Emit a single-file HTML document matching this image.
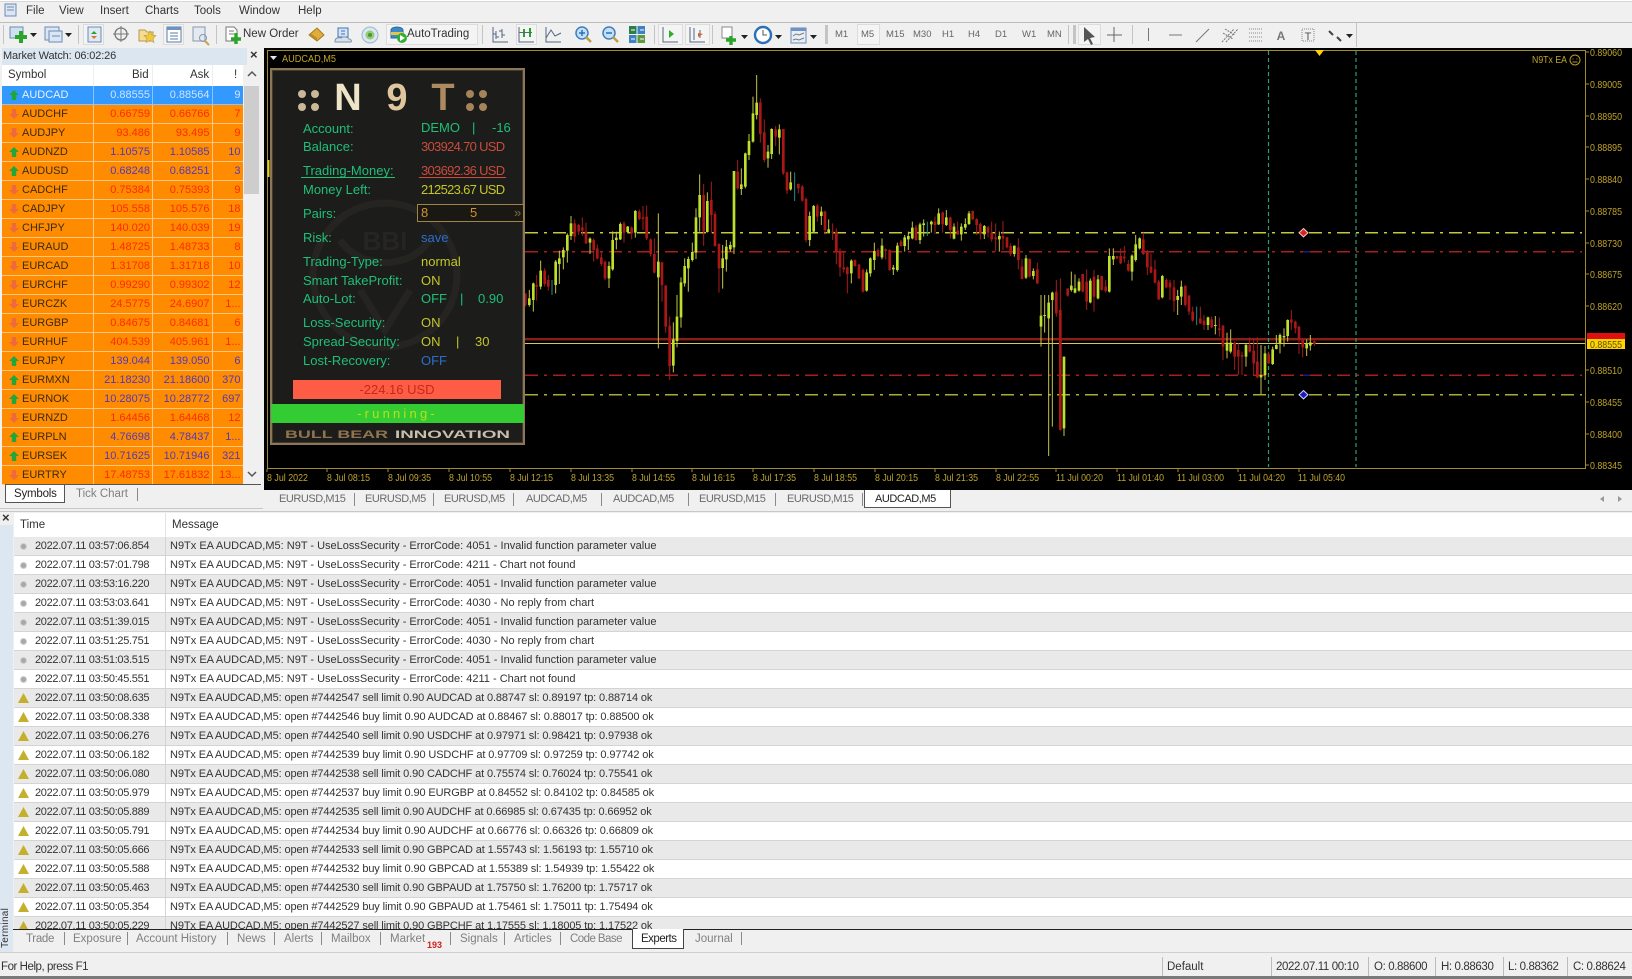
<!DOCTYPE html>
<html><head><meta charset="utf-8"><title>MT4</title>
<style>
html,body{margin:0;padding:0;width:1632px;height:979px;overflow:hidden;background:#f0f0f0;font-family:"Liberation Sans",sans-serif;font-size:11px;color:#333}
.a{position:absolute;white-space:nowrap}
#mw{position:absolute;left:2px;top:86px;width:241px;border-collapse:collapse;table-layout:fixed;font-size:11px}
#mw td{height:17px;padding:1px 2px 0 0;border-bottom:1px solid #ffc680;border-right:1px solid #ffc680;background:#ff8c00;text-align:right;line-height:17px;overflow:hidden;white-space:nowrap}
#mw td:first-child{text-align:left;padding:1px 0 0 20px;color:#3a2a10;position:relative;font-size:11px}
#mw .u td{color:#5238bb}#mw .d td{color:#ff2a00}
#mw .u td:first-child,#mw .d td:first-child{color:#3a2a10}
#mw .s td{background:#3399ff;color:#cfe4ff;border-color:#8cc4ff}
#mw .s td:first-child{color:#e8f2ff}
#mw i{position:absolute;left:7px;top:4px;width:10px;height:10px}
.up{background:#22a53a;clip-path:polygon(50% 0,100% 50%,72% 50%,72% 100%,28% 100%,28% 50%,0 50%)}
.dn{background:#ee6a3c;clip-path:polygon(50% 100%,100% 50%,72% 50%,72% 0,28% 0,28% 50%,0 50%)}
#log{position:absolute;left:14px;top:537px;width:1618px;height:392px;overflow:hidden;font-size:11px}
#log div{position:relative;height:18px;line-height:18px;border-bottom:1px solid #d4d4d4;background:#fff}
#log div:nth-child(odd){background:#e9e9e9}
#log b{position:absolute;left:21px;font-weight:normal;color:#333;letter-spacing:-.32px}
#log span{position:absolute;left:156px;color:#333}
#log div:nth-child(n+9) span{letter-spacing:-.12px}
#log u{position:absolute;left:150.5px;top:0;width:1px;height:19px;background:#d4d4d4}
#log em{position:absolute;left:6px;top:6px;width:7px;height:7px;border-radius:50%;background:#a8a8a8;border:1px solid #d0d0d0;box-sizing:border-box}
#log s{position:absolute;left:4px;top:4px;width:11px;height:10px;background:#c4b02c;clip-path:polygon(50% 0,100% 100%,0 100%)}
.pl{position:absolute;left:303px;font-size:13px;color:#1fbf78;line-height:16px;white-space:nowrap}
.pv{position:absolute;font-size:13px;line-height:16px;white-space:nowrap;color:#1fbf78}
.nm{letter-spacing:-.7px}
.py{color:#c4c62a}.pr{color:#c94c3c}.pb{color:#2b6fd0}
.tab{position:absolute;top:492px;color:#6a6a6a;font-size:11px;letter-spacing:-.45px;line-height:15px}
.sep{position:absolute;width:1px;background:#8a8a8a}
.tt{position:absolute;top:932px;color:#808080;font-size:11.5px;line-height:15px;white-space:nowrap}
.st{position:absolute;top:960px;font-size:11.5px;line-height:14px;letter-spacing:-.38px;white-space:nowrap}
.tf{position:absolute;top:29px;font-size:9.5px;color:#666;line-height:12px}
</style></head><body>

<!-- menu -->
<div class="a" style="left:0;top:0;width:1632px;height:1px;background:#fff"></div>
<div class="a" style="left:0;top:1px;width:1632px;height:1px;background:#d8d8d8"></div>
<div class="a" style="left:0;top:22px;width:1632px;height:1px;background:#bdbdbd"></div>
<div class="a" style="left:26px;top:4px;font-size:11.5px;color:#333;line-height:14px">File</div>
<div class="a" style="left:59px;top:4px;font-size:11.5px;color:#333;line-height:14px">View</div>
<div class="a" style="left:100px;top:4px;font-size:11.5px;color:#333;line-height:14px">Insert</div>
<div class="a" style="left:145px;top:4px;font-size:11.5px;color:#333;line-height:14px">Charts</div>
<div class="a" style="left:194px;top:4px;font-size:11.5px;color:#333;line-height:14px">Tools</div>
<div class="a" style="left:239px;top:4px;font-size:11.5px;color:#333;line-height:14px">Window</div>
<div class="a" style="left:298px;top:4px;font-size:11.5px;color:#333;line-height:14px">Help</div>

<!-- toolbar -->
<svg class="a" style="left:0;top:0" width="1400" height="50" viewBox="0 0 1400 50">
<g fill="none" stroke="#6d8bb0">
<rect x="5" y="4" width="11" height="12" fill="#dce6f2"/><path d="M7 7h7M7 10h7"/>
</g>
<g fill="#c4c4c4"><rect x="3" y="25" width="1" height="19"/><rect x="78" y="25" width="1" height="19"/><rect x="216" y="25" width="1" height="19"/><rect x="482" y="25" width="1" height="19"/><rect x="654" y="25" width="1" height="19"/><rect x="712" y="25" width="1" height="19"/><rect x="825" y="25" width="3" height="19"/><rect x="1068" y="25" width="1" height="19"/><rect x="1073" y="25" width="3" height="19"/><rect x="1132" y="25" width="1" height="19"/><rect x="1356" y="23" width="1" height="24"/></g>
<g fill="#f4f4f4" stroke="#dcdcdc"><rect x="83.5" y="24.5" width="20" height="20"/><rect x="163.5" y="24.5" width="20" height="20"/><rect x="386.5" y="24.5" width="91" height="20"/><rect x="516.5" y="24.5" width="20" height="20"/><rect x="658.5" y="24.5" width="24" height="20"/><rect x="685.5" y="24.5" width="24" height="20"/><rect x="857.5" y="24.5" width="22" height="20"/><rect x="1078.5" y="24.5" width="22" height="20"/></g>
<rect x="10" y="27" width="13" height="11" fill="#cfe0f2" stroke="#6a8bb5"/><path d="M21 31v12M15 37h12" stroke="#2aa52a" stroke-width="4"/>
<path d="M30 33h7l-3.5 4z M65 33h7l-3.5 4z M1 0z" fill="#222"/>
<rect x="45" y="27" width="14" height="13" fill="#dbe6f3" stroke="#6a8bb5"/><rect x="49" y="31" width="13" height="11" fill="#dbe6f3" stroke="#6a8bb5"/><path d="M52 36h8" stroke="#6a8bb5"/>
<rect x="88" y="27" width="13" height="15" fill="#dfe8f3" stroke="#6a8bb5"/><path d="M94 31l3 3h-6z" fill="#2aa52a"/><path d="M94 39l3-3h-6z" fill="#e0703a"/>
<circle cx="121" cy="34" r="6" fill="none" stroke="#777" stroke-width="1.3"/><path d="M121 26v16M113 34h16" stroke="#777"/>
<path d="M139 30h6l2 2h6v9h-14z" fill="#f4dc90" stroke="#b39a50"/><path d="M150 31l2 4 4 .5-3 3 1 4-4-2-4 2 1-4-3-3 4-.5z" fill="#f0c838" stroke="#b39a50" stroke-width=".6"/>
<rect x="167" y="27" width="14" height="15" fill="#fff" stroke="#5b7ca5"/><rect x="167" y="27" width="14" height="3" fill="#6d93c4"/><path d="M170 33h8M170 36h8M170 39h8" stroke="#5b7ca5"/>
<rect x="193" y="27" width="12" height="14" fill="#e4eaf2" stroke="#8898ad"/><circle cx="203" cy="38" r="3.5" fill="none" stroke="#8898ad"/><path d="M205 41l4 4" stroke="#c9a54a" stroke-width="2"/>
<path d="M226 27h8l3 3v11h-11z" fill="#fff" stroke="#777"/><path d="M229 31h5M229 34h5" stroke="#777"/><path d="M236 33v11M231 39h10" stroke="#2aa52a" stroke-width="3.4"/>
<path d="M309 35l8-7 7 7-7 6z" fill="#e0ac3a" stroke="#a57a20"/><path d="M309 35l8 6v-3l-7-5z" fill="#b98a28"/>
<path d="M338 28h10v9h-10z" fill="#d4e4f6" stroke="#3f74b5"/><path d="M341 31h4M341 34h4" stroke="#3f74b5"/><path d="M335 41c0-3 4-4 6-3 2-2 7-1 8 1 2 0 3 2 2 3h-16z" fill="#d8e0ea" stroke="#7f93aa"/>
<circle cx="370" cy="35" r="8" fill="#d7e7f4" stroke="#9cb7cf"/><circle cx="370" cy="35" r="4.5" fill="#9cc86e"/><circle cx="370" cy="35" r="2" fill="#3f9b38"/>
<path d="M391 30c1-4 11-4 12 0v8h-12z" fill="#3c88c9" stroke="#266a9f"/><rect x="391" y="32" width="12" height="3" fill="#e6c44a"/><circle cx="402" cy="38" r="5" fill="#30b030"/><path d="M400 35l5 3-5 3z" fill="#fff"/>
<g fill="none" stroke="#53677f" stroke-width="1"><path d="M493 27v15h15M496 31v8M493 34h3M496 37h3M502 29v9M499 31h3M502 35h3"/><path d="M519 27v15h15"/><path d="M546 27v15h15"/><path d="M663 27v15h15"/><path d="M690 27v15h15"/><path d="M694 28v12M700 30v8"/></g>
<rect x="523" y="29" width="2" height="8" fill="#27a027"/><rect x="529" y="28" width="2" height="9" fill="#27a027"/><rect x="519" y="32" width="13" height="1" fill="#53677f"/>
<path d="M546 38l5-8 4 6 6-3" fill="none" stroke="#53677f"/>
<path d="M669 30l5 4-5 4z" fill="#2ab02a"/><path d="M698 33l5 1-5 3z" fill="#d9622a"/>
<circle cx="582" cy="33" r="6" fill="#c5e0f6" stroke="#3f7fc0" stroke-width="1.5"/><path d="M579 33h6M582 30v6" stroke="#2a70b8" stroke-width="1.5"/><path d="M586 37l5 5" stroke="#c59a3a" stroke-width="2.4"/>
<circle cx="609" cy="33" r="6" fill="#c5e0f6" stroke="#3f7fc0" stroke-width="1.5"/><path d="M606 33h6" stroke="#2a70b8" stroke-width="1.5"/><path d="M613 37l5 5" stroke="#c59a3a" stroke-width="2.4"/>
<rect x="629" y="26" width="7.5" height="8" fill="#2d7f4a"/><rect x="637.5" y="26" width="7.5" height="8" fill="#3e82c4"/><rect x="629" y="35" width="7.5" height="8" fill="#3e82c4"/><rect x="637.5" y="35" width="7.5" height="8" fill="#5d9a3e"/><path d="M631 30h4M640 30h4M631 39h4M640 39h4" stroke="#fff"/>
<path d="M722 27h10v11h-10z" fill="#fff" stroke="#8a8a8a"/><path d="M731 36v9M726 40h10" stroke="#2aa52a" stroke-width="3.4"/><path d="M741 35h7l-3.5 4z M775 35h7l-3.5 4z M810 35h7l-3.5 4z" fill="#222"/>
<circle cx="763" cy="35" r="8" fill="#fff" stroke="#2a70b8" stroke-width="2.4"/><path d="M763 30v5h4" stroke="#555" fill="none"/>
<rect x="791" y="28" width="15" height="15" fill="#e8eef5" stroke="#6a8bb5"/><rect x="791" y="28" width="15" height="3" fill="#6d93c4"/><path d="M793 36l3-2 3 1 5-2M793 40l3-1 3 1 5-2" stroke="#7a7a7a" fill="none"/>
<path d="M1084 27v15l4-3 3 6 2-1-3-6 5-1z" fill="#555"/>
<path d="M1114 27v15M1107 35h15" stroke="#666"/>
<path d="M1148.5 28v13M1169 35h13M1196 42l13-13" stroke="#777"/>
<path d="M1222 42l12-13M1226 42l12-13M1223 33l10 6M1225 29l10 6" stroke="#777" stroke-dasharray="2 1"/>
<path d="M1249 29h13M1249 33h13M1249 37h13M1249 41h13" stroke="#888" stroke-dasharray="1 1"/>
<text x="1281" y="40" text-anchor="middle" font-family="Liberation Sans" font-weight="bold" font-size="12" fill="#777">A</text>
<rect x="1302" y="29" width="12" height="12" fill="none" stroke="#888" stroke-dasharray="1 1"/>
<text x="1308" y="40" text-anchor="middle" font-family="Liberation Sans" font-size="11" fill="#555">T</text>
<path d="M1329 31l4 4M1337 37l4 4" stroke="#444" stroke-width="2"/><path d="M1346 34h7l-3.5 4z" fill="#222"/>
</svg>
<div class="a" style="left:243px;top:27px;font-size:11.5px;color:#333;line-height:14px">New Order</div>
<div class="a" style="left:407px;top:27px;font-size:11.5px;color:#333;line-height:14px">AutoTrading</div>
<div class="tf" style="left:835px">M1</div>
<div class="tf" style="left:861px">M5</div>
<div class="tf" style="left:886px">M15</div>
<div class="tf" style="left:913px">M30</div>
<div class="tf" style="left:942px">H1</div>
<div class="tf" style="left:968px">H4</div>
<div class="tf" style="left:995px">D1</div>
<div class="tf" style="left:1022px">W1</div>
<div class="tf" style="left:1047px">MN</div>

<!-- market watch -->
<div class="a" style="left:2px;top:48px;width:245px;height:17px;background:#dce6f1"></div>
<div class="a" style="left:3px;top:48px;font-size:11px;color:#333;line-height:16px;letter-spacing:-.15px">Market Watch: 06:02:26</div>
<div class="a" style="left:250px;top:47px;font-size:13px;font-weight:bold;color:#333;line-height:16px">×</div>
<div class="a" style="left:2px;top:65px;width:260px;height:21px;background:#fff"></div>
<div class="a" style="left:93px;top:65px;width:1px;height:21px;background:#eee"></div>
<div class="a" style="left:152px;top:65px;width:1px;height:21px;background:#eee"></div>
<div class="a" style="left:212px;top:65px;width:1px;height:21px;background:#eee"></div>
<div class="a" style="left:8px;top:67px;font-size:11.5px;line-height:16px">Symbol</div>
<div class="a" style="left:132px;top:67px;font-size:11.5px;line-height:16px">Bid</div>
<div class="a" style="left:190px;top:67px;font-size:11.5px;line-height:16px">Ask</div>
<div class="a" style="left:234px;top:67px;font-size:11.5px;line-height:16px">!</div>
<table id="mw"><colgroup><col style="width:91px"><col style="width:59.5px"><col style="width:59.5px"><col style="width:31px"></colgroup>
<tr class="s u"><td><i class="up"></i>AUDCAD</td><td>0.88555</td><td>0.88564</td><td>9</td></tr>
<tr class="d"><td><i class="dn"></i>AUDCHF</td><td>0.66759</td><td>0.66766</td><td>7</td></tr>
<tr class="d"><td><i class="dn"></i>AUDJPY</td><td>93.486</td><td>93.495</td><td>9</td></tr>
<tr class="u"><td><i class="up"></i>AUDNZD</td><td>1.10575</td><td>1.10585</td><td>10</td></tr>
<tr class="u"><td><i class="up"></i>AUDUSD</td><td>0.68248</td><td>0.68251</td><td>3</td></tr>
<tr class="d"><td><i class="dn"></i>CADCHF</td><td>0.75384</td><td>0.75393</td><td>9</td></tr>
<tr class="d"><td><i class="dn"></i>CADJPY</td><td>105.558</td><td>105.576</td><td>18</td></tr>
<tr class="d"><td><i class="dn"></i>CHFJPY</td><td>140.020</td><td>140.039</td><td>19</td></tr>
<tr class="d"><td><i class="dn"></i>EURAUD</td><td>1.48725</td><td>1.48733</td><td>8</td></tr>
<tr class="d"><td><i class="dn"></i>EURCAD</td><td>1.31708</td><td>1.31718</td><td>10</td></tr>
<tr class="d"><td><i class="dn"></i>EURCHF</td><td>0.99290</td><td>0.99302</td><td>12</td></tr>
<tr class="d"><td><i class="dn"></i>EURCZK</td><td>24.5775</td><td>24.6907</td><td>1...</td></tr>
<tr class="d"><td><i class="dn"></i>EURGBP</td><td>0.84675</td><td>0.84681</td><td>6</td></tr>
<tr class="d"><td><i class="dn"></i>EURHUF</td><td>404.539</td><td>405.961</td><td>1...</td></tr>
<tr class="u"><td><i class="up"></i>EURJPY</td><td>139.044</td><td>139.050</td><td>6</td></tr>
<tr class="u"><td><i class="up"></i>EURMXN</td><td>21.18230</td><td>21.18600</td><td>370</td></tr>
<tr class="u"><td><i class="up"></i>EURNOK</td><td>10.28075</td><td>10.28772</td><td>697</td></tr>
<tr class="d"><td><i class="dn"></i>EURNZD</td><td>1.64456</td><td>1.64468</td><td>12</td></tr>
<tr class="u"><td><i class="up"></i>EURPLN</td><td>4.76698</td><td>4.78437</td><td>1...</td></tr>
<tr class="u"><td><i class="up"></i>EURSEK</td><td>10.71625</td><td>10.71946</td><td>321</td></tr>
<tr class="d"><td><i class="dn"></i>EURTRY</td><td>17.48753</td><td>17.61832</td><td>13...</td></tr>
</table>
<div class="a" style="left:243px;top:65px;width:19px;height:420px;background:#f0f0f0"></div>
<div class="a" style="left:244px;top:86px;width:15px;height:108px;background:#cdcdcd"></div>
<svg class="a" style="left:244px;top:68px" width="16" height="412"><path d="M4 8l4-4 4 4M4 404l4 4 4-4" fill="none" stroke="#555" stroke-width="1.5"/></svg>
<div class="a" style="left:5px;top:484px;width:256px;height:1px;background:#555"></div>
<div class="a" style="left:5px;top:485px;width:60px;height:18px;background:#fff;border:1px solid #555;border-top:none;box-sizing:border-box"></div>
<div class="a" style="left:14px;top:487px;font-size:11.5px;color:#222;line-height:14px;letter-spacing:-.2px">Symbols</div>
<div class="a" style="left:76px;top:487px;font-size:11.5px;color:#808080;line-height:14px">Tick Chart</div>
<div class="sep" style="left:137px;top:488px;height:13px"></div>
<div class="a" style="left:0;top:508px;width:263px;height:1px;background:#c8c8c8"></div>

<!-- chart -->
<svg class="a" style="left:264px;top:48px;background:#000" width="1368" height="440" viewBox="264 48 1368 440">
<path d="M267.5 50.5H1585.5V468.5H267.5Z" fill="none" stroke="#a08c2c"/>
<g fill="none" stroke-width="1.5">
<path d="M525 232.7H1582" stroke="#c4c83a" stroke-dasharray="13 6 3 6"/>
<path d="M525 251.7H1582" stroke="#a81e1e" stroke-dasharray="13 6 3 6"/>
<path d="M525 375.3H1582" stroke="#a81e1e" stroke-dasharray="13 6 3 6"/>
<path d="M525 394.7H1582" stroke="#a8ac34" stroke-dasharray="13 6 3 6"/>
</g>
<rect x="525" y="338" width="1060" height="2.4" fill="#8a1c1c"/>
<rect x="525" y="343" width="1060" height="1" fill="#d8c858"/>
<path d="M1268.5 51V467M1356 51V467" stroke="#2d9c70" stroke-width="1.2" stroke-dasharray="4 3" fill="none"/>
<path d="M1303.5 228.5l4.5 4.2-4.5 4.2-4.5-4.2z" fill="#e02020" stroke="#e8d0d0"/>
<path d="M1303.5 390.5l4.5 4.2-4.5 4.2-4.5-4.2z" fill="#1a1ac8" stroke="#d8d8f0"/>
<path d="M1303 251.7h7M1303 375.3h7" stroke="#1a1a90" stroke-width="1.5"/>
<path d="M1315 50h9l-4.5 6z" fill="#ffd400"/>
<g transform="translate(520 60) scale(.33333)" fill="none">
<path stroke="#c4c44a" stroke-width="3" d="M28 690V740M40 668V755M62 602V688M107 600V700M118 572V672M130 562V628M142 520V608M153 468V540M210 532V582M267 605V684M278 514V632M289 515V568M301 487V540M323 498V520M346 450V533M415 460V865M460 787V937M471 705V862M483 652V803M494 595V680M505 590V695M517 548V605M528 445V597M539 343V515M562 397V518M608 555V686M619 540V635M631 545V575M642 333V582M664 325V405M676 278V385M687 222V300M699 110V248M710 45V178M744 255V323M755 205V297M778 193V283M812 335V392M869 455V558M881 435V518M904 440V495M926 478V520"/>
<path stroke="#bde02a" stroke-width="8" d="M28 715V735M40 670V720M62 632V680M107 605V675M118 595V612M130 570V592M142 525V572M153 490V528M210 536V548M267 618V655M278 540V628M289 533V540M301 492V538M323 500V516M346 453V518M415 605V652M460 838V917M471 770V843M483 667V772M494 618V670M505 597V625M517 576V600M528 472V578M539 405V472M562 423V516M608 595V624M619 560V598M631 555V568M642 333V562M664 373V387M676 280V380M687 243V285M699 160V245M710 128V165M744 275V295M755 207V282M778 208V233M812 367V388M869 468V540M881 438V515M904 455V468M926 508V520"/>
<path stroke="#a51c1c" stroke-width="3" d="M16 700V740M50 645V722M74 625V680M85 645V692M164 478V548M176 492V525M187 472V528M198 488V552M221 535V605M232 553V598M244 575V618M255 602V660M312 484V548M335 500V538M358 448V480M369 438V510M380 437V540M392 535V590M403 535V640M426 605V725M437 675V818M449 770V960M551 372V558M574 365V520M585 455V560M597 550V698M653 300V388M721 115V248M733 178V307M767 198V258M790 207V345M801 335V402M835 370V400M847 375V425M858 412V547M892 432V485M915 452V523M938 490V540M949 505V613"/>
<path stroke="#ab1616" stroke-width="8" d="M16 700V735M50 675V680M74 632V672M85 660V680M164 490V530M176 495V515M187 502V512M198 515V550M221 540V570M232 565V595M244 592V612M255 605V655M312 490V518M335 503V520M358 455V477M369 472V477M380 470V535M392 538V582M403 582V638M426 607V675M437 677V800M449 797V918M551 405V515M574 420V465M585 462V558M597 552V625M653 335V385M721 127V222M733 217V300M767 208V230M790 207V340M801 337V392M835 372V385M847 380V422M858 417V540M892 437V470M915 455V510M938 515V518M949 515V575"/>
<path stroke="#2a8a8a" stroke-width="3" d="M96 660V705M824 337V423"/>
</g>
<g transform="translate(840 180) scale(.33333)" fill="none">
<path stroke="#c4c44a" stroke-width="3" d="M34 238V310M80 268V335M91 232V290M103 188V270M126 175V238M160 255V285M172 188V275M194 165V215M205 155V210M217 125V178M240 128V192M251 118V170M274 122V158M296 85V135M319 90V138M342 130V178M364 130V182M376 115V150M387 93V135M433 135V177M478 155V215M523 197V230M558 225V297M580 265V298M603 345V500M614 345V458M626 345V828M637 335V740M672 530V768M694 275V335M705 283V340M717 295V335M751 295V370M774 285V358M808 205V338M820 205V255M876 223V302M887 165V245M899 172V208"/>
<path stroke="#bde02a" stroke-width="8" d="M34 242V280M80 277V332M91 235V280M103 213V240M126 197V232M160 263V268M172 197V270M194 172V198M205 168V178M217 143V175M240 133V180M251 130V135M274 125V133M296 100V133M319 112V135M342 140V176M364 140V163M376 132V143M387 100V132M433 138V163M478 168V178M523 197V222M558 235V293M580 273V288M603 407V440M614 405V408M626 368V415M637 338V360M672 530V745M694 317V330M705 325V338M717 305V332M751 302V367M774 298V355M808 228V335M820 228V238M876 227V275M887 193V240M899 175V205"/>
<path stroke="#a51c1c" stroke-width="3" d="M0 205V290M11 215V278M22 260V340M45 238V260M57 252V297M69 265V338M114 205V232M137 205V238M149 208V272M183 180V200M228 135V182M285 110V162M308 95V158M331 110V175M353 125V165M398 92V120M410 115V165M421 128V178M444 138V172M455 125V185M467 130V215M489 123V210M501 170V205M512 190V228M535 175V268M546 237V298M569 235V292M592 248V312M649 300V410M661 295V752M683 325V350M728 282V337M740 268V390M762 270V395M785 288V332M797 300V338M831 228V237M842 205V252M853 198V248M865 240V275M910 158V225M922 210V285M933 220V280M945 240V310M956 300V360"/>
<path stroke="#ab1616" stroke-width="8" d="M0 213V262M11 262V268M22 262V282M45 240V258M57 254V295M69 270V335M114 210V228M137 208V213M149 210V270M183 185V198M228 142V180M285 125V135M308 97V133M331 113V150M353 152V163M398 93V118M410 117V135M421 132V160M444 142V158M455 158V178M467 172V178M489 168V175M501 172V202M512 198V222M535 202V240M546 260V297M569 237V290M592 268V310M649 335V400M661 390V750M683 325V347M728 282V335M740 305V365M762 290V350M785 288V330M797 320V333M831 228V235M842 228V250M853 230V235M865 252V272M910 178V222M922 213V262M933 260V278M945 268V308M956 305V358"/>
<path stroke="#2a8a8a" stroke-width="3" d="M262 125V168"/>
</g>
<g transform="translate(1150 200) scale(.33333)" fill="none">
<path stroke="#c4c44a" stroke-width="3" d="M37 225V295M83 270V345M94 242V315M174 350V390M196 348V403M231 398V475M242 388V460M288 430V500M333 435V584M345 438V540M368 440V495M379 405V448M390 400V460M402 385V440M413 358V425M470 418V468M481 405V452"/>
<path stroke="#bde02a" stroke-width="8" d="M37 228V292M83 288V300M94 260V290M174 352V375M196 375V378M231 428V452M242 428V455M288 435V470M333 525V532M345 460V525M368 448V492M379 435V447M390 405V430M402 408V412M413 360V408M470 430V445M481 427V437"/>
<path stroke="#a51c1c" stroke-width="3" d="M49 235V265M60 240V300M72 240V335M106 255V320M117 285V345M128 320V365M151 320V372M162 345V390M185 350V384M208 352V410M219 375V480M254 425V510M265 430V525M276 455V525M299 412V458M311 415V525M322 412V535M356 455V492M424 330V390M436 362V400M447 378V462M458 418V472M493 420V438"/>
<path stroke="#ab1616" stroke-width="8" d="M49 240V262M60 248V262M72 262V303M106 258V315M117 287V335M128 335V362M151 355V370M162 362V375M185 358V382M208 385V390M219 377V440M254 428V470M265 450V470M276 465V470M299 435V455M311 452V490M322 485V532M356 462V490M424 358V368M436 365V385M447 380V415M458 420V442M493 424V432"/>
<path stroke="#2a8a8a" stroke-width="3" d="M140 320V375"/>
</g>
<path d="M1585 52h4M1585 84h4M1585 116h4M1585 147h4M1585 179h4M1585 211h4M1585 243h4M1585 274h4M1585 306h4M1585 370h4M1585 402h4M1585 434h4M1585 465h4" stroke="#a08c2c"/>
<path d="M267 469v3M327 469v3M388 469v3M449 469v3M510 469v3M571 469v3M632 469v3M692 469v3M753 469v3M814 469v3M875 469v3M935 469v3M996 469v3M1056 469v3M1117 469v3M1178 469v3M1238 469v3M1299 469v3" stroke="#a08c2c"/>
<g font-family="Liberation Sans" font-size="10.5" fill="#c0a52a" lengthAdjust="spacingAndGlyphs">
<text x="1590" y="56" textLength="32" lengthAdjust="spacingAndGlyphs">0.89060</text><text x="1590" y="88" textLength="32" lengthAdjust="spacingAndGlyphs">0.89005</text><text x="1590" y="120" textLength="32" lengthAdjust="spacingAndGlyphs">0.88950</text><text x="1590" y="151" textLength="32" lengthAdjust="spacingAndGlyphs">0.88895</text><text x="1590" y="183" textLength="32" lengthAdjust="spacingAndGlyphs">0.88840</text><text x="1590" y="215" textLength="32" lengthAdjust="spacingAndGlyphs">0.88785</text><text x="1590" y="247" textLength="32" lengthAdjust="spacingAndGlyphs">0.88730</text><text x="1590" y="278" textLength="32" lengthAdjust="spacingAndGlyphs">0.88675</text><text x="1590" y="310" textLength="32" lengthAdjust="spacingAndGlyphs">0.88620</text><text x="1590" y="374" textLength="32" lengthAdjust="spacingAndGlyphs">0.88510</text><text x="1590" y="406" textLength="32" lengthAdjust="spacingAndGlyphs">0.88455</text><text x="1590" y="438" textLength="32" lengthAdjust="spacingAndGlyphs">0.88400</text><text x="1590" y="469" textLength="32" lengthAdjust="spacingAndGlyphs">0.88345</text>
<text x="267" y="481" textLength="41" lengthAdjust="spacingAndGlyphs">8 Jul 2022</text><text x="327" y="481" textLength="43" lengthAdjust="spacingAndGlyphs">8 Jul 08:15</text><text x="388" y="481" textLength="43" lengthAdjust="spacingAndGlyphs">8 Jul 09:35</text><text x="449" y="481" textLength="43" lengthAdjust="spacingAndGlyphs">8 Jul 10:55</text><text x="510" y="481" textLength="43" lengthAdjust="spacingAndGlyphs">8 Jul 12:15</text><text x="571" y="481" textLength="43" lengthAdjust="spacingAndGlyphs">8 Jul 13:35</text><text x="632" y="481" textLength="43" lengthAdjust="spacingAndGlyphs">8 Jul 14:55</text><text x="692" y="481" textLength="43" lengthAdjust="spacingAndGlyphs">8 Jul 16:15</text><text x="753" y="481" textLength="43" lengthAdjust="spacingAndGlyphs">8 Jul 17:35</text><text x="814" y="481" textLength="43" lengthAdjust="spacingAndGlyphs">8 Jul 18:55</text><text x="875" y="481" textLength="43" lengthAdjust="spacingAndGlyphs">8 Jul 20:15</text><text x="935" y="481" textLength="43" lengthAdjust="spacingAndGlyphs">8 Jul 21:35</text><text x="996" y="481" textLength="43" lengthAdjust="spacingAndGlyphs">8 Jul 22:55</text><text x="1056" y="481" textLength="47" lengthAdjust="spacingAndGlyphs">11 Jul 00:20</text><text x="1117" y="481" textLength="47" lengthAdjust="spacingAndGlyphs">11 Jul 01:40</text><text x="1177" y="481" textLength="47" lengthAdjust="spacingAndGlyphs">11 Jul 03:00</text><text x="1238" y="481" textLength="47" lengthAdjust="spacingAndGlyphs">11 Jul 04:20</text><text x="1298" y="481" textLength="47" lengthAdjust="spacingAndGlyphs">11 Jul 05:40</text>
<text x="1532" y="63" textLength="35" lengthAdjust="spacingAndGlyphs">N9Tx EA</text><text x="282" y="62" font-size="10" textLength="54" lengthAdjust="spacingAndGlyphs">AUDCAD,M5</text>
</g>
<circle cx="1575" cy="60" r="5" fill="none" stroke="#b89a28"/><path d="M1572.5 59h1M1576.5 59h1M1572.5 62h5" stroke="#b89a28"/>
<path d="M270 56h7l-3.5 4z" fill="#e8e8e8"/>
<rect x="1587" y="333" width="38" height="7" fill="#e01010"/>
<rect x="1587" y="339" width="38" height="10" fill="#ffd400"/>
<text x="1590" y="348" font-family="Liberation Sans" font-size="10.5" fill="#5a4c10" textLength="32" lengthAdjust="spacingAndGlyphs">0.88555</text>
<path d="M268.5 160V177" stroke="#e8d020" stroke-width="2"/>
</svg>

<!-- Panel -->
<div class="a" style="left:270px;top:68px;width:255px;height:377px;background:#1c1c1a;border:2px solid #8d7657;box-sizing:border-box;box-shadow:inset 0 0 0 1px #443a2a"></div>
<svg class="a" style="left:270px;top:68px" width="255" height="377" viewBox="270 68 255 377">
<g fill="none" stroke="#252421" stroke-width="7"><circle cx="385" cy="275" r="72"/><path d="M340 240c20 30 70 30 90 0M360 290l25 40 25-40"/></g>
<text x="385" y="250" text-anchor="middle" font-family="Liberation Sans" font-weight="bold" font-size="26" fill="#262522">BBI</text>
<g fill="#c9b999"><circle cx="302" cy="94" r="4"/><circle cx="315" cy="94" r="4"/><circle cx="302" cy="107" r="4"/><circle cx="315" cy="107" r="4"/></g>
<g fill="#a5845a"><circle cx="470" cy="94" r="4"/><circle cx="483" cy="94" r="4"/><circle cx="470" cy="107" r="4"/><circle cx="483" cy="107" r="4"/></g>
<text x="348" y="110" text-anchor="middle" font-family="Liberation Sans" font-weight="bold" font-size="38" fill="#eee5c8">N</text>
<text x="397" y="110" text-anchor="middle" font-family="Liberation Sans" font-weight="bold" font-size="38" fill="#dfc69f">9</text>
<text x="443" y="110" text-anchor="middle" font-family="Liberation Sans" font-weight="bold" font-size="38" fill="#ad8a60">T</text>
<text x="285" y="438" font-family="Liberation Sans" font-weight="bold" font-size="11" textLength="103" lengthAdjust="spacingAndGlyphs" fill="#8f7450">BULL BEAR</text>
<text x="395" y="438" font-family="Liberation Sans" font-weight="bold" font-size="11" textLength="115" lengthAdjust="spacingAndGlyphs" fill="#c8c0ac">INNOVATION</text>
</svg>
<div class="pl" style="top:121px">Account:</div><div class="pv" style="left:421px;top:120px">DEMO</div><div class="pv" style="left:472px;top:120px">|</div><div class="pv" style="left:492px;top:120px">-16</div>
<div class="pl" style="top:139px">Balance:</div><div class="pv pr nm" style="left:421px;top:139px">303924.70 USD</div>
<div class="pl" style="top:163px">Trading-Money:</div><div class="pv pr nm" style="left:421px;top:163px">303692.36 USD</div>
<div class="a" style="left:301px;top:177px;width:94px;height:1px;background:#1fbf78"></div>
<div class="a" style="left:419px;top:177px;width:87px;height:1px;background:#c94c3c"></div>
<div class="pl" style="top:182px">Money Left:</div><div class="pv py nm" style="left:421px;top:182px">212523.67 USD</div>
<div class="pl" style="top:206px">Pairs:</div>
<div class="a" style="left:417px;top:204px;width:107px;height:18px;border:1px solid #a08348;box-sizing:border-box;background:#1a1812"></div>
<div class="pv" style="left:421px;top:205px;color:#d09330">8</div><div class="pv" style="left:470px;top:205px;color:#d09330">5</div><div class="pv" style="left:514px;top:205px;color:#7d6a4a">»</div>
<div class="pl" style="top:230px">Risk:</div><div class="pv pb" style="left:421px;top:230px">save</div>
<div class="pl" style="top:254px">Trading-Type:</div><div class="pv py" style="left:421px;top:254px">normal</div>
<div class="pl" style="top:273px">Smart TakeProfit:</div><div class="pv py" style="left:421px;top:273px">ON</div>
<div class="pl" style="top:291px">Auto-Lot:</div><div class="pv" style="left:421px;top:291px">OFF</div><div class="pv" style="left:460px;top:291px">|</div><div class="pv" style="left:478px;top:291px">0.90</div>
<div class="pl" style="top:315px">Loss-Security:</div><div class="pv py" style="left:421px;top:315px">ON</div>
<div class="pl" style="top:334px">Spread-Security:</div><div class="pv py" style="left:421px;top:334px">ON</div><div class="pv py" style="left:456px;top:334px">|</div><div class="pv py" style="left:475px;top:334px">30</div>
<div class="pl" style="top:353px">Lost-Recovery:</div><div class="pv pb" style="left:421px;top:353px">OFF</div>
<div class="a" style="left:293px;top:380px;width:208px;height:19px;background:#ff5c45;color:#c42a1c;font-size:13px;line-height:19px;text-align:center">-224.16 USD</div>
<div class="a" style="left:271px;top:404px;width:253px;height:19px;background:#33cc33;color:#b8e020;font-size:13px;line-height:19px;text-align:center;letter-spacing:3.2px">-running-</div>

<!-- chart tabs -->
<div class="a" style="left:264px;top:488px;width:1368px;height:2px;background:#000"></div>
<div class="tab" style="left:279px">EURUSD,M15</div><div class="sep" style="left:354px;top:493px;height:13px"></div>
<div class="tab" style="left:365px">EURUSD,M5</div><div class="sep" style="left:433px;top:493px;height:13px"></div>
<div class="tab" style="left:444px">EURUSD,M5</div><div class="sep" style="left:513px;top:493px;height:13px"></div>
<div class="tab" style="left:526px">AUDCAD,M5</div><div class="sep" style="left:601px;top:493px;height:13px"></div>
<div class="tab" style="left:613px">AUDCAD,M5</div><div class="sep" style="left:688px;top:493px;height:13px"></div>
<div class="tab" style="left:699px">EURUSD,M15</div><div class="sep" style="left:775px;top:493px;height:13px"></div>
<div class="tab" style="left:787px">EURUSD,M15</div><div class="sep" style="left:862px;top:493px;height:13px"></div>
<div class="a" style="left:864px;top:490px;width:87px;height:18px;background:#fff;border:1px solid #555;border-top:none;box-sizing:border-box"></div>
<div class="tab" style="left:875px;color:#222">AUDCAD,M5</div>
<svg class="a" style="left:1595px;top:493px" width="30" height="12"><path d="M9 3l-4 3 4 3zM23 3l4 3-4 3z" fill="#999"/></svg>

<!-- terminal -->
<div class="a" style="left:0;top:511px;width:1632px;height:1px;background:#c8c8c8"></div>
<div class="a" style="left:2px;top:510px;font-size:13px;font-weight:bold;line-height:16px;color:#333">×</div>
<div class="a" style="left:0;top:525px;width:13px;height:427px;background:#dde7f2"></div>
<div class="a" style="left:14px;top:513px;width:1618px;height:24px;background:#fff"></div>
<div class="a" style="left:165px;top:513px;width:1px;height:24px;background:#e4e4e4"></div>
<div class="a" style="left:20px;top:517px;font-size:11.5px;line-height:16px">Time</div>
<div class="a" style="left:172px;top:517px;font-size:11.5px;line-height:16px">Message</div>
<div id="log">
<div><em></em><b>2022.07.11 03:57:06.854</b><u></u><span>N9Tx EA AUDCAD,M5: N9T - UseLossSecurity - ErrorCode: 4051 - Invalid function parameter value</span></div>
<div><em></em><b>2022.07.11 03:57:01.798</b><u></u><span>N9Tx EA AUDCAD,M5: N9T - UseLossSecurity - ErrorCode: 4211 - Chart not found</span></div>
<div><em></em><b>2022.07.11 03:53:16.220</b><u></u><span>N9Tx EA AUDCAD,M5: N9T - UseLossSecurity - ErrorCode: 4051 - Invalid function parameter value</span></div>
<div><em></em><b>2022.07.11 03:53:03.641</b><u></u><span>N9Tx EA AUDCAD,M5: N9T - UseLossSecurity - ErrorCode: 4030 - No reply from chart</span></div>
<div><em></em><b>2022.07.11 03:51:39.015</b><u></u><span>N9Tx EA AUDCAD,M5: N9T - UseLossSecurity - ErrorCode: 4051 - Invalid function parameter value</span></div>
<div><em></em><b>2022.07.11 03:51:25.751</b><u></u><span>N9Tx EA AUDCAD,M5: N9T - UseLossSecurity - ErrorCode: 4030 - No reply from chart</span></div>
<div><em></em><b>2022.07.11 03:51:03.515</b><u></u><span>N9Tx EA AUDCAD,M5: N9T - UseLossSecurity - ErrorCode: 4051 - Invalid function parameter value</span></div>
<div><em></em><b>2022.07.11 03:50:45.551</b><u></u><span>N9Tx EA AUDCAD,M5: N9T - UseLossSecurity - ErrorCode: 4211 - Chart not found</span></div>
<div><s></s><b>2022.07.11 03:50:08.635</b><u></u><span>N9Tx EA AUDCAD,M5: open #7442547 sell limit 0.90 AUDCAD at 0.88747 sl: 0.89197 tp: 0.88714 ok</span></div>
<div><s></s><b>2022.07.11 03:50:08.338</b><u></u><span>N9Tx EA AUDCAD,M5: open #7442546 buy limit 0.90 AUDCAD at 0.88467 sl: 0.88017 tp: 0.88500 ok</span></div>
<div><s></s><b>2022.07.11 03:50:06.276</b><u></u><span>N9Tx EA AUDCAD,M5: open #7442540 sell limit 0.90 USDCHF at 0.97971 sl: 0.98421 tp: 0.97938 ok</span></div>
<div><s></s><b>2022.07.11 03:50:06.182</b><u></u><span>N9Tx EA AUDCAD,M5: open #7442539 buy limit 0.90 USDCHF at 0.97709 sl: 0.97259 tp: 0.97742 ok</span></div>
<div><s></s><b>2022.07.11 03:50:06.080</b><u></u><span>N9Tx EA AUDCAD,M5: open #7442538 sell limit 0.90 CADCHF at 0.75574 sl: 0.76024 tp: 0.75541 ok</span></div>
<div><s></s><b>2022.07.11 03:50:05.979</b><u></u><span>N9Tx EA AUDCAD,M5: open #7442537 buy limit 0.90 EURGBP at 0.84552 sl: 0.84102 tp: 0.84585 ok</span></div>
<div><s></s><b>2022.07.11 03:50:05.889</b><u></u><span>N9Tx EA AUDCAD,M5: open #7442535 sell limit 0.90 AUDCHF at 0.66985 sl: 0.67435 tp: 0.66952 ok</span></div>
<div><s></s><b>2022.07.11 03:50:05.791</b><u></u><span>N9Tx EA AUDCAD,M5: open #7442534 buy limit 0.90 AUDCHF at 0.66776 sl: 0.66326 tp: 0.66809 ok</span></div>
<div><s></s><b>2022.07.11 03:50:05.666</b><u></u><span>N9Tx EA AUDCAD,M5: open #7442533 sell limit 0.90 GBPCAD at 1.55743 sl: 1.56193 tp: 1.55710 ok</span></div>
<div><s></s><b>2022.07.11 03:50:05.588</b><u></u><span>N9Tx EA AUDCAD,M5: open #7442532 buy limit 0.90 GBPCAD at 1.55389 sl: 1.54939 tp: 1.55422 ok</span></div>
<div><s></s><b>2022.07.11 03:50:05.463</b><u></u><span>N9Tx EA AUDCAD,M5: open #7442530 sell limit 0.90 GBPAUD at 1.75750 sl: 1.76200 tp: 1.75717 ok</span></div>
<div><s></s><b>2022.07.11 03:50:05.354</b><u></u><span>N9Tx EA AUDCAD,M5: open #7442529 buy limit 0.90 GBPAUD at 1.75461 sl: 1.75011 tp: 1.75494 ok</span></div>
<div><s></s><b>2022.07.11 03:50:05.229</b><u></u><span>N9Tx EA AUDCAD,M5: open #7442527 sell limit 0.90 GBPCHF at 1.17555 sl: 1.18005 tp: 1.17522 ok</span></div>
</div>
<div class="a" style="left:13px;top:929px;width:1619px;height:1px;background:#222"></div>
<div class="a" style="left:632px;top:929px;width:52px;height:20px;background:#fff;border:1px solid #444;border-top:none;box-sizing:border-box"></div>
<div class="tt" style="left:26px;letter-spacing:-.3px">Trade</div><div class="sep" style="left:64px;top:932px;height:13px"></div>
<div class="tt" style="left:73px">Exposure</div><div class="sep" style="left:127px;top:932px;height:13px"></div>
<div class="tt" style="left:136px">Account History</div><div class="sep" style="left:227px;top:932px;height:13px"></div>
<div class="tt" style="left:237px">News</div><div class="sep" style="left:274px;top:932px;height:13px"></div>
<div class="tt" style="left:284px">Alerts</div><div class="sep" style="left:321px;top:932px;height:13px"></div>
<div class="tt" style="left:331px">Mailbox</div><div class="sep" style="left:380px;top:932px;height:13px"></div>
<div class="tt" style="left:390px">Market</div><div class="a" style="left:427px;top:940px;font-size:9px;font-weight:bold;color:#d02020;line-height:11px">193</div><div class="sep" style="left:450px;top:932px;height:13px"></div>
<div class="tt" style="left:460px">Signals</div><div class="sep" style="left:504px;top:932px;height:13px"></div>
<div class="tt" style="left:514px">Articles</div><div class="sep" style="left:560px;top:932px;height:13px"></div>
<div class="tt" style="left:570px;letter-spacing:-.55px">Code Base</div>
<div class="tt" style="left:641px;color:#222;letter-spacing:-.5px">Experts</div>
<div class="tt" style="left:695px">Journal</div><div class="sep" style="left:741px;top:932px;height:13px"></div>
<div class="a" style="left:0;top:925px;width:13px;height:27px;background:#dde7f2"></div>
<div class="a" style="left:-14px;top:922px;width:40px;font-size:10px;line-height:12px;color:#333;transform:rotate(-90deg);text-align:center;letter-spacing:.3px">Terminal</div>
<div class="a" style="left:0;top:952px;width:1632px;height:1px;background:#cfcfcf"></div>

<!-- status -->
<div class="st" style="left:1px;letter-spacing:-.45px">For Help, press F1</div>
<div class="sep" style="left:1162px;top:957px;height:19px;background:#bbb"></div><div class="st" style="left:1167px;letter-spacing:0">Default</div>
<div class="sep" style="left:1271px;top:957px;height:19px;background:#bbb"></div><div class="st" style="left:1276px">2022.07.11 00:10</div>
<div class="sep" style="left:1368px;top:957px;height:19px;background:#bbb"></div><div class="st" style="left:1374px">O: 0.88600</div>
<div class="sep" style="left:1435px;top:957px;height:19px;background:#bbb"></div><div class="st" style="left:1441px">H: 0.88630</div>
<div class="sep" style="left:1503px;top:957px;height:19px;background:#bbb"></div><div class="st" style="left:1508px">L: 0.88362</div>
<div class="sep" style="left:1567px;top:957px;height:19px;background:#bbb"></div><div class="st" style="left:1573px">C: 0.88624</div>
<div class="a" style="left:0;top:976px;width:1632px;height:3px;background:#7a7a7a"></div>
</body></html>
